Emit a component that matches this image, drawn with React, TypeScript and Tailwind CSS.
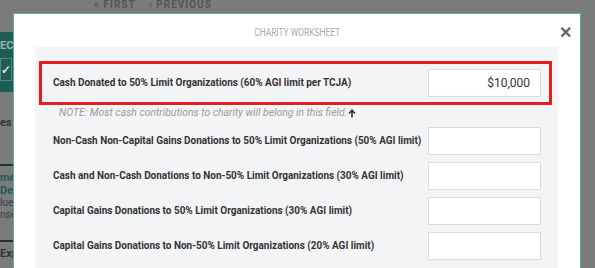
import React from "react";

const rows = [
  "Non-Cash Non-Capital Gains Donations to 50% Limit Organizations (50% AGI limit)",
  "Cash and Non-Cash Donations to Non-50% Limit Organizations (30% AGI limit)",
  "Capital Gains Donations to 50% Limit Organizations (30% AGI limit)",
  "Capital Gains Donations to Non-50% Limit Organizations (20% AGI limit)",
];

function PageStrip() {
  // dimmed page content peeking out at the left
  return (
    <div className="flex w-[13px] shrink-0 flex-col overflow-hidden text-[11px] font-bold">
      <div className="h-[19px]" />
      <div className="flex h-[60px] flex-col bg-[#1f5c55]">
        <div className="mt-[7px] h-[14px] leading-[14px] text-[#9fb3b0] whitespace-nowrap">EC</div>
        <div className="mt-[5px] flex h-[23px] w-[12px] items-center justify-center border border-[#4f8a82] text-[12px] text-[#d8e2e0]">
          ✓
        </div>
      </div>
      <div className="mt-[24px] h-[14px] leading-[14px] text-[#333] whitespace-nowrap">es</div>
      <div className="mt-[34px] h-[2px] bg-[#2e2e2e]" />
      <div className="mt-[5px] leading-[13px] text-[#1f5c55] whitespace-nowrap">me</div>
      <div className="leading-[13px] text-[#1f5c55] whitespace-nowrap">De</div>
      <div className="text-[10px] font-normal leading-[12px] text-[#3b3b3b] whitespace-nowrap">lue</div>
      <div className="text-[10px] font-normal leading-[12px] text-[#3b3b3b] whitespace-nowrap">nse</div>
      <div className="mt-[19px] h-[2px] bg-[#2e2e2e]" />
      <div className="mt-[5px] leading-[13px] text-[#333] whitespace-nowrap">Exp</div>
    </div>
  );
}

function Label({ children }: { children: React.ReactNode }) {
  return (
    <span className="min-w-0 flex-1 origin-left scale-x-[0.905] whitespace-nowrap text-[11px] font-bold leading-[14px] text-[#333]">
      {children}
    </span>
  );
}

function Field({ value }: { value?: string }) {
  return (
    <div className="flex h-[28px] w-[113px] shrink-0 items-center justify-end border border-[#dcdcdc] bg-white pr-[10px] text-[12px] text-[#333]">
      {value}
    </div>
  );
}

export default function App() {
  return (
    <div
      className="flex h-[268px] w-[595px] flex-col overflow-hidden bg-[#7b7b7b]"
      style={{ fontFamily: "Roboto, 'Liberation Sans', sans-serif" }}
    >
      <div className="flex h-[13px] shrink-0 items-start">
        <div className="ml-[94px] -mt-[1px] flex gap-[13px] text-[10px] font-bold leading-[11px] tracking-[1px] text-[#545454]">
          <span>« FIRST</span>
          <span>‹ PREVIOUS</span>
        </div>
      </div>
      <div className="flex flex-1">
        <PageStrip />
        <div className="flex w-[568px] shrink-0 flex-col border-l border-r border-t border-[#4fb3a8] bg-white">
          <div className="relative flex h-[33px] shrink-0 items-center justify-center pt-[4px]">
            <span className="inline-block scale-x-[0.84] text-[10px] text-[#a8a8a8]">CHARITY WORKSHEET</span>
            <span className="absolute right-[8px] top-[10px] text-[16px] font-bold leading-[17px] text-[#666]">✕</span>
          </div>
          <div className="ml-[21px] mr-[22px] flex-1 bg-[#f3f4f6] pt-[14px]">
            <div className="ml-[4px] mr-[6px] flex items-center border-[3px] border-[#e41e1e] py-[5px] pl-[11px] pr-[8px]">
              <Label>Cash Donated to 50% Limit Organizations (60% AGI limit per TCJA)</Label>
              <Field value="$10,000" />
            </div>
            <div className="mt-[1px] flex items-center whitespace-nowrap pl-[24px] text-[10.4px] italic leading-[14px] text-[#9a9a9a]">
              NOTE: Most cash contributions to charity will belong in this field.
              <svg width="8" height="9" viewBox="0 0 8 9" className="ml-[1px]">
                <path d="M4 8.5V1.5M1 4.5L4 1.2L7 4.5" fill="none" stroke="#333" strokeWidth="1.6" />
              </svg>
            </div>
            <div className="mt-[7px] flex flex-col gap-[7px] pl-[18px] pr-[17px]">
              {rows.map((r, i) => (
                <div key={i} className="flex items-center">
                  <Label>{r}</Label>
                  <Field />
                </div>
              ))}
            </div>
          </div>
        </div>
      </div>
    </div>
  );
}
